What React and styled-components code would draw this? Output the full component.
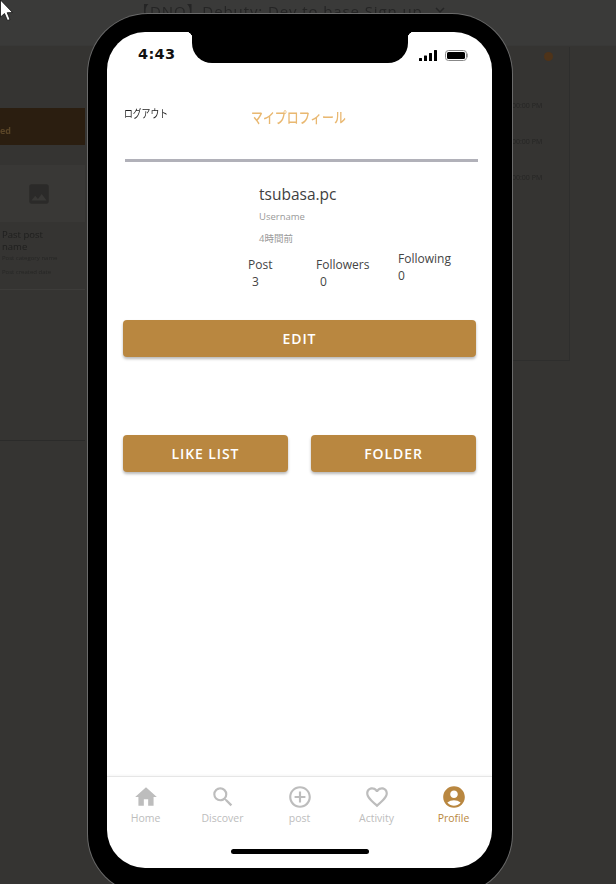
import React from 'react'
import styled, { createGlobalStyle } from 'styled-components'
import { MdHome, MdSearch, MdAddCircleOutline, MdFavoriteBorder, MdAccountCircle, MdImage, MdExpandMore } from 'react-icons/md'

const GlobalStyle = createGlobalStyle`
  html, body {
    margin: 0;
    padding: 0;
    width: 616px;
    height: 884px;
    overflow: hidden;
    background: #353432;
  }
  * {
    box-sizing: border-box;
  }
`

const Page = styled.div`
  position: relative;
  width: 616px;
  height: 884px;
  overflow: hidden;
  font-family: "Open Sans", "Noto Sans CJK JP", sans-serif;
`

/* dimmed desktop page behind the phone */
const TopBar = styled.div`
  display: flex;
  height: 46px;
  background: #3a3a39;
  border-bottom: 1px solid #383837;
  padding: 1px 0 0 134px;
  color: #252525;
  font-size: 15px;
  line-height: 20px;
  letter-spacing: 0.9px;
  filter: blur(0.6px);
  white-space: nowrap;
`

const Caret = styled.span`
  margin-left: 8px;
  font-size: 18px;
  line-height: 0;
`

const Behind = styled.div`
  display: flex;
  justify-content: space-between;
  padding-right: 46px;
`

const LeftGhost = styled.div`
  width: 85px;
  padding-top: 62px;
  filter: blur(0.5px);
`

const Banner = styled.div`
  height: 37px;
  background: #2b1e10;
  color: #5a4527;
  font-size: 9px;
  font-weight: 700;
  line-height: 46px;
`

const GhostCard = styled.div`
  margin-top: 20px;
  height: 125px;
  border-bottom: 1px solid #3d3c3a;
`

const GhostImage = styled.div`
  height: 57px;
  background: #393836;
  color: #2b2a29;
  display: flex;
  align-items: center;
  justify-content: center;
  padding-right: 7px;
  font-size: 26px;
`

const GhostTitle = styled.div`
  margin: 7px 0 1px 2px;
  color: #1f1f1e;
  font-size: 9.5px;
  line-height: 12px;
`

const GhostMeta = styled.div`
  margin: 0 0 5px 2px;
  color: #262625;
  font-size: 6px;
  line-height: 9px;
  white-space: nowrap;
`

const GhostRule = styled.div`
  margin-top: 150px;
  height: 2px;
  border-top: 1px solid #2b2b2a;
`

const RightGhost = styled.div`
  width: 58px;
  height: 314px;
  margin-top: 1px;
  border-right: 1px solid #2e2e2d;
  border-bottom: 1px solid #2e2e2d;
  filter: blur(0.4px);
`

const Dot = styled.div`
  width: 9px;
  height: 9px;
  margin: 5px 0 0 32px;
  border-radius: 50%;
  background: #4e3319;
`

const GhostTimes = styled.div`
  display: flex;
  flex-direction: column;
  gap: 27px;
  margin-top: 40px;
  color: #252524;
  font-size: 7px;
  line-height: 9px;
  white-space: nowrap;
`

const Cursor = styled.svg`
  position: absolute;
  left: 0;
  top: 0;
`

/* phone */
const Phone = styled.div`
  position: absolute;
  left: 88px;
  top: 14px;
  width: 424px;
  height: 880px;
  padding: 18px 20px 0 19px;
  background: #000;
  border-radius: 60px;
  box-shadow: 0 0 0 1px #6a6a6a;
`

const Screen = styled.div`
  position: relative;
  display: flex;
  flex-direction: column;
  height: 836px;
  overflow: hidden;
  background: #fff;
  border-radius: 38px;
`

const Notch = styled.div`
  position: absolute;
  top: 0;
  left: 85px;
  width: 216px;
  height: 31px;
  background: #000;
  border-radius: 0 0 20px 20px;
  &::before,
  &::after {
    content: '';
    position: absolute;
    top: 0;
    width: 6px;
    height: 6px;
  }
  &::before {
    left: -6px;
    background: radial-gradient(circle at 0 100%, transparent 6px, #000 6.5px);
  }
  &::after {
    right: -6px;
    background: radial-gradient(circle at 100% 100%, transparent 6px, #000 6.5px);
  }
`

const StatusBar = styled.div`
  display: flex;
  align-items: center;
  justify-content: space-between;
  height: 46px;
  padding: 0 24px 0 31px;
`

const Clock = styled.span`
  font-family: "DejaVu Sans", sans-serif;
  font-size: 14.5px;
  font-weight: 700;
  letter-spacing: 0.3px;
  color: #111;
  transform: translateY(-1px);
`

const StatusIcons = styled.div`
  display: flex;
  align-items: center;
  gap: 8px;
`

const Header = styled.div`
  display: flex;
  align-items: flex-start;
  height: 84px;
  margin: 0 14px 0 18px;
  padding-top: 28px;
  border-bottom: 3px solid #b1b1b9;
`

const Logout = styled.span`
  width: 127px;
  margin-left: -1px;
  color: #222;
  font-size: 11px;
  line-height: 16px;
  white-space: nowrap;
  transform: scaleX(0.8);
  transform-origin: left center;
`

const Title = styled.span`
  margin-top: 2px;
  color: #e9b871;
  font-size: 14.5px;
  font-weight: 500;
  line-height: 20px;
  white-space: nowrap;
  transform: scaleX(0.82);
  transform-origin: left center;
`

const Profile = styled.div`
  padding: 21px 0 0 152px;
`

const Name = styled.div`
  color: #3f3f3f;
  font-size: 15.5px;
  font-weight: 500;
  line-height: 22px;
`

const SubText = styled.div`
  margin-top: ${(p) => p.$gap}px;
  color: #999;
  font-size: 9.5px;
  line-height: 14px;
`

const Stats = styled.div`
  display: flex;
  margin: 4px 0 0 141px;
`

const Stat = styled.div`
  width: ${(p) => p.$width}px;
  padding-top: ${(p) => p.$top}px;
  color: #444;
  font-size: 12px;
  line-height: 17px;
`

const StatValue = styled.div`
  padding-left: ${(p) => p.$indent}px;
`

const Button = styled.button`
  display: block;
  width: ${(p) => p.$width};
  height: 37px;
  padding: 0;
  border: 0;
  border-radius: 4px;
  background: #b98740;
  box-shadow: 0 2px 3px rgba(0, 0, 0, 0.28);
  color: #fff;
  font-family: inherit;
  font-size: 14px;
  font-weight: 600;
  letter-spacing: 0.9px;
`

const EditWrap = styled.div`
  margin: 30px 16px 0;
`

const ButtonRow = styled.div`
  display: flex;
  justify-content: space-between;
  margin: 78px 16px 0;
`

const Spacer = styled.div`
  flex: 1;
`

const TabBar = styled.nav`
  display: flex;
  height: 92px;
  padding: 7px 0 0;
  border-top: 1px solid #e6e6e6;
  box-shadow: 0 -1px 2px rgba(0, 0, 0, 0.04);
`

const Tab = styled.div`
  flex: 1;
  display: flex;
  flex-direction: column;
  align-items: center;
  color: ${(p) => (p.$active ? '#b98740' : '#bdbdbd')};
  font-size: 10.5px;
  line-height: 14px;
`

const TabIcon = styled.div`
  height: 26px;
  margin-bottom: 1px;
  font-size: 26px;
  line-height: 0;
`

const HomeBar = styled.div`
  position: absolute;
  left: 124px;
  bottom: 14px;
  width: 138px;
  height: 5px;
  border-radius: 3px;
  background: #000;
`

const tabs = [
  { label: 'Home', icon: MdHome },
  { label: 'Discover', icon: MdSearch },
  { label: 'post', icon: MdAddCircleOutline },
  { label: 'Activity', icon: MdFavoriteBorder },
  { label: 'Profile', icon: MdAccountCircle, active: true }
]

function App () {
  return (
    <Page>
      <GlobalStyle />
      <TopBar>
        【DNO】Debuty: Dev to base Sign up
        <Caret><MdExpandMore /></Caret>
      </TopBar>
      <Behind>
        <LeftGhost>
          <Banner>ed</Banner>
          <GhostCard>
            <GhostImage><MdImage /></GhostImage>
            <GhostTitle>Past post<br />name</GhostTitle>
            <GhostMeta>Post category name</GhostMeta>
            <GhostMeta>Post created date</GhostMeta>
          </GhostCard>
          <GhostRule />
        </LeftGhost>
        <RightGhost>
          <Dot />
          <GhostTimes>
            <span>00:00 PM</span>
            <span>00:00 PM</span>
            <span>00:00 PM</span>
          </GhostTimes>
        </RightGhost>
      </Behind>

      <Phone>
        <Screen>
          <Notch />
          <StatusBar>
            <Clock>4:43</Clock>
            <StatusIcons>
              <svg width='18' height='11' viewBox='0 0 18 11'>
                <rect x='0' y='8' width='3' height='3' rx='0.5' fill='#000' />
                <rect x='5' y='5.5' width='3' height='5.5' rx='0.5' fill='#000' />
                <rect x='10' y='3' width='3' height='8' rx='0.5' fill='#000' />
                <rect x='15' y='0' width='3' height='11' rx='0.5' fill='#000' />
              </svg>
              <svg width='23' height='11' viewBox='0 0 23 11'>
                <rect x='0.5' y='0.5' width='21' height='10' rx='3' fill='none' stroke='#888' />
                <rect x='2' y='2' width='18' height='7' rx='1.5' fill='#000' />
                <rect x='22' y='3.5' width='1' height='4' fill='#aaa' />
              </svg>
            </StatusIcons>
          </StatusBar>

          <Header>
            <Logout>ログアウト</Logout>
            <Title>マイプロフィール</Title>
          </Header>

          <Profile>
            <Name>tsubasa.pc</Name>
            <SubText $gap={5}>Username</SubText>
            <SubText $gap={8}>4時間前</SubText>
          </Profile>
          <Stats>
            <Stat $width={68} $top={6}>
              Post
              <StatValue $indent={4}>3</StatValue>
            </Stat>
            <Stat $width={82} $top={6}>
              Followers
              <StatValue $indent={4}>0</StatValue>
            </Stat>
            <Stat $width={70} $top={0}>
              Following
              <StatValue $indent={0}>0</StatValue>
            </Stat>
          </Stats>

          <EditWrap>
            <Button $width='100%'>EDIT</Button>
          </EditWrap>
          <ButtonRow>
            <Button $width='165px'>LIKE LIST</Button>
            <Button $width='165px'>FOLDER</Button>
          </ButtonRow>

          <Spacer />
          <TabBar>
            {tabs.map((t) => (
              <Tab key={t.label} $active={t.active}>
                <TabIcon><t.icon /></TabIcon>
                {t.label}
              </Tab>
            ))}
          </TabBar>
          <HomeBar />
        </Screen>
      </Phone>

      <Cursor width='14' height='24' viewBox='0 0 14 24'>
        <path d='M0.5 0 L0.5 17 L4.5 13.5 L7.5 20.5 L10 19.5 L7.2 12.7 L12.5 12.5 Z' fill='#fff' stroke='#111' strokeWidth='0.8' />
      </Cursor>
    </Page>
  )
}

export default App
